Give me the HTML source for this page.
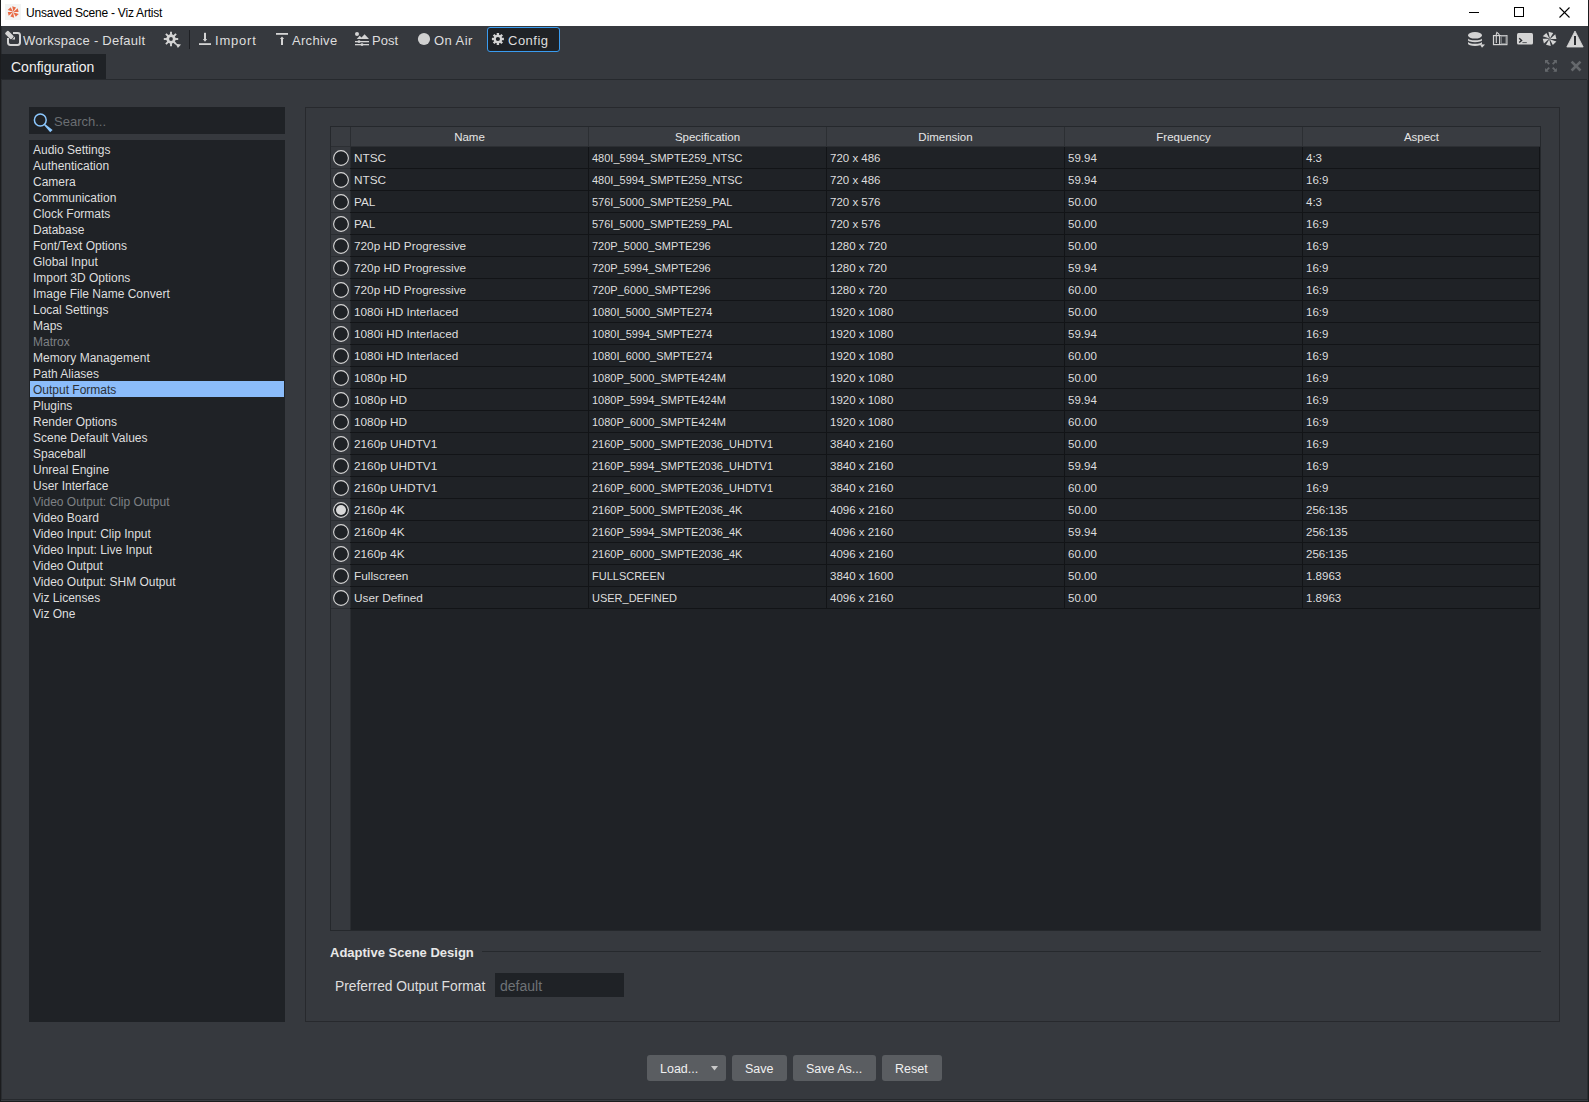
<!DOCTYPE html>
<html><head><meta charset="utf-8"><style>
*{margin:0;padding:0;box-sizing:border-box}
html,body{width:1589px;height:1102px;overflow:hidden;background:#36393e;font-family:"Liberation Sans",sans-serif}
body>div,#root div,#root svg{position:absolute}
.t{white-space:nowrap;line-height:1}
</style></head>
<body><div id="root">
<div style="left:0px;top:0px;width:1px;height:1102px;background:#1b1c1e;"></div>
<div style="left:1px;top:26px;width:1px;height:1075px;background:#2a2d31;"></div>
<div style="left:1588px;top:0px;width:1px;height:1102px;background:#1b1c1e;"></div>
<div style="left:1587px;top:80px;width:1px;height:1020px;background:#2a2d31;"></div>
<div style="left:1px;top:1099px;width:1587px;height:1px;background:#26292d;"></div>
<div style="left:1px;top:1100px;width:1587px;height:1px;background:#393c41;"></div>
<div style="left:0px;top:1101px;width:1589px;height:1px;background:#1b1c1e;"></div>
<div style="left:1px;top:0px;width:1587px;height:26px;background:#ffffff;"></div>
<div style="left:5px;top:4px;width:16px;height:16px;background:#f3f4f4;"></div>
<svg style="left:7px;top:6px" width="13" height="13" viewBox="0 0 13 13"><polygon points="0.2,-0.2 -1.0,-5.8 2.8,-4.6" fill="#e86a45" transform="translate(6.2 6) rotate(0)"/><polygon points="0.2,-0.2 -1.0,-5.8 2.8,-4.6" fill="#e86a45" transform="translate(6.2 6) rotate(60)"/><polygon points="0.2,-0.2 -1.0,-5.8 2.8,-4.6" fill="#e86a45" transform="translate(6.2 6) rotate(120)"/><polygon points="0.2,-0.2 -1.0,-5.8 2.8,-4.6" fill="#e86a45" transform="translate(6.2 6) rotate(180)"/><polygon points="0.2,-0.2 -1.0,-5.8 2.8,-4.6" fill="#e86a45" transform="translate(6.2 6) rotate(240)"/><polygon points="0.2,-0.2 -1.0,-5.8 2.8,-4.6" fill="#e86a45" transform="translate(6.2 6) rotate(300)"/></svg>
<div class="t" style="left:26px;top:7px;font-size:12px;color:#000000;letter-spacing:-0.22px">Unsaved Scene - Viz Artist</div>
<div style="left:1469px;top:12px;width:10px;height:1px;background:#000;"></div>
<div style="left:1514px;top:7px;width:10px;height:10px;background:transparent;border:1px solid #000"></div>
<svg style="left:1559px;top:7px" width="11" height="11" viewBox="0 0 11 11"><g stroke="#000" stroke-width="1.1"><line x1="0.5" y1="0.5" x2="10.5" y2="10.5"/><line x1="10.5" y1="0.5" x2="0.5" y2="10.5"/></g></svg>
<div class="t" style="left:23px;top:34px;font-size:13px;color:#dedede;letter-spacing:0.25px">Workspace - Default</div>
<div class="t" style="left:215px;top:34px;font-size:13px;color:#dedede;letter-spacing:0.8px">Import</div>
<div class="t" style="left:292px;top:34px;font-size:13px;color:#dedede;letter-spacing:0.3px">Archive</div>
<div class="t" style="left:372px;top:34px;font-size:13px;color:#dedede;">Post</div>
<div class="t" style="left:434px;top:34px;font-size:13px;color:#dedede;letter-spacing:0.45px">On Air</div>
<div style="left:487px;top:27px;width:73px;height:25px;background:#1f2226;border:1px solid #3a9cf0;border-radius:3px"></div>
<div class="t" style="left:508px;top:34px;font-size:13px;color:#dedede;letter-spacing:0.5px">Config</div>
<div style="left:1px;top:54px;width:105px;height:25px;background:#1f2226;"></div>
<div class="t" style="left:11px;top:60px;font-size:14px;color:#f0f0f0;">Configuration</div>
<div style="left:2px;top:79px;width:1585px;height:1px;background:#26292d;"></div>
<div style="left:29px;top:107px;width:256px;height:27px;background:#1f2226;"></div>
<div class="t" style="left:54px;top:115px;font-size:13px;color:#6a6e72;">Search...</div>
<div style="left:29px;top:140px;width:256px;height:882px;background:#1f2226;"></div>
<div style="left:30px;top:381px;width:254px;height:16px;background:#8bbcfa;"></div>
<div class="t" style="left:33px;top:144px;font-size:12px;color:#dedede;">Audio Settings</div>
<div class="t" style="left:33px;top:160px;font-size:12px;color:#dedede;">Authentication</div>
<div class="t" style="left:33px;top:176px;font-size:12px;color:#dedede;">Camera</div>
<div class="t" style="left:33px;top:192px;font-size:12px;color:#dedede;">Communication</div>
<div class="t" style="left:33px;top:208px;font-size:12px;color:#dedede;">Clock Formats</div>
<div class="t" style="left:33px;top:224px;font-size:12px;color:#dedede;">Database</div>
<div class="t" style="left:33px;top:240px;font-size:12px;color:#dedede;">Font/Text Options</div>
<div class="t" style="left:33px;top:256px;font-size:12px;color:#dedede;">Global Input</div>
<div class="t" style="left:33px;top:272px;font-size:12px;color:#dedede;">Import 3D Options</div>
<div class="t" style="left:33px;top:288px;font-size:12px;color:#dedede;">Image File Name Convert</div>
<div class="t" style="left:33px;top:304px;font-size:12px;color:#dedede;">Local Settings</div>
<div class="t" style="left:33px;top:320px;font-size:12px;color:#dedede;">Maps</div>
<div class="t" style="left:33px;top:336px;font-size:12px;color:#7d8084;">Matrox</div>
<div class="t" style="left:33px;top:352px;font-size:12px;color:#dedede;">Memory Management</div>
<div class="t" style="left:33px;top:368px;font-size:12px;color:#dedede;">Path Aliases</div>
<div class="t" style="left:33px;top:384px;font-size:12px;color:#2c3035;">Output Formats</div>
<div class="t" style="left:33px;top:400px;font-size:12px;color:#dedede;">Plugins</div>
<div class="t" style="left:33px;top:416px;font-size:12px;color:#dedede;">Render Options</div>
<div class="t" style="left:33px;top:432px;font-size:12px;color:#dedede;">Scene Default Values</div>
<div class="t" style="left:33px;top:448px;font-size:12px;color:#dedede;">Spaceball</div>
<div class="t" style="left:33px;top:464px;font-size:12px;color:#dedede;">Unreal Engine</div>
<div class="t" style="left:33px;top:480px;font-size:12px;color:#dedede;">User Interface</div>
<div class="t" style="left:33px;top:496px;font-size:12px;color:#7d8084;">Video Output: Clip Output</div>
<div class="t" style="left:33px;top:512px;font-size:12px;color:#dedede;">Video Board</div>
<div class="t" style="left:33px;top:528px;font-size:12px;color:#dedede;">Video Input: Clip Input</div>
<div class="t" style="left:33px;top:544px;font-size:12px;color:#dedede;">Video Input: Live Input</div>
<div class="t" style="left:33px;top:560px;font-size:12px;color:#dedede;">Video Output</div>
<div class="t" style="left:33px;top:576px;font-size:12px;color:#dedede;">Video Output: SHM Output</div>
<div class="t" style="left:33px;top:592px;font-size:12px;color:#dedede;">Viz Licenses</div>
<div class="t" style="left:33px;top:608px;font-size:12px;color:#dedede;">Viz One</div>
<div style="left:305px;top:107px;width:1255px;height:915px;background:transparent;border:1px solid #27292d"></div>
<div style="left:330px;top:126px;width:1211px;height:805px;background:#1f2226;border:1px solid #25282c"></div>
<div style="left:331px;top:127px;width:1209px;height:20px;background:#393c41;"></div>
<div style="left:331px;top:146px;width:1209px;height:1px;background:#2c2f33;"></div>
<div style="left:331px;top:147px;width:19px;height:783px;background:#36393e;"></div>
<div style="left:350px;top:127px;width:1px;height:803px;background:#2a2d31;"></div>
<div style="left:588px;top:127px;width:1px;height:19px;background:#2c2f33;"></div>
<div style="left:826px;top:127px;width:1px;height:19px;background:#2c2f33;"></div>
<div style="left:1064px;top:127px;width:1px;height:19px;background:#2c2f33;"></div>
<div style="left:1302px;top:127px;width:1px;height:19px;background:#2c2f33;"></div>
<div class="t" style="left:351px;top:132px;width:237px;text-align:center;font-size:11.5px;color:#e6e6e6">Name</div>
<div class="t" style="left:589px;top:132px;width:237px;text-align:center;font-size:11.5px;color:#e6e6e6">Specification</div>
<div class="t" style="left:827px;top:132px;width:237px;text-align:center;font-size:11.5px;color:#e6e6e6">Dimension</div>
<div class="t" style="left:1065px;top:132px;width:237px;text-align:center;font-size:11.5px;color:#e6e6e6">Frequency</div>
<div class="t" style="left:1303px;top:132px;width:237px;text-align:center;font-size:11.5px;color:#e6e6e6">Aspect</div>
<div style="left:350px;top:168px;width:1190px;height:1px;background:#121417;"></div>
<div style="left:331px;top:168px;width:19px;height:1px;background:#2a2d31;"></div>
<div class="t" style="left:354px;top:153px;font-size:11.8px;color:#dedede;">NTSC</div>
<div class="t" style="left:592px;top:153px;font-size:11px;color:#dedede;">480I_5994_SMPTE259_NTSC</div>
<div class="t" style="left:830px;top:153px;font-size:11.5px;color:#dedede;">720 x 486</div>
<div class="t" style="left:1068px;top:153px;font-size:11.5px;color:#dedede;">59.94</div>
<div class="t" style="left:1306px;top:153px;font-size:11.5px;color:#dedede;">4:3</div>
<svg style="left:333px;top:150px" width="16" height="16" viewBox="0 0 16 16"><circle cx="8" cy="8" r="7.4" fill="#1f2226" stroke="#d6d6d6" stroke-width="1.1"/></svg>
<div style="left:350px;top:190px;width:1190px;height:1px;background:#121417;"></div>
<div style="left:331px;top:190px;width:19px;height:1px;background:#2a2d31;"></div>
<div class="t" style="left:354px;top:175px;font-size:11.8px;color:#dedede;">NTSC</div>
<div class="t" style="left:592px;top:175px;font-size:11px;color:#dedede;">480I_5994_SMPTE259_NTSC</div>
<div class="t" style="left:830px;top:175px;font-size:11.5px;color:#dedede;">720 x 486</div>
<div class="t" style="left:1068px;top:175px;font-size:11.5px;color:#dedede;">59.94</div>
<div class="t" style="left:1306px;top:175px;font-size:11.5px;color:#dedede;">16:9</div>
<svg style="left:333px;top:172px" width="16" height="16" viewBox="0 0 16 16"><circle cx="8" cy="8" r="7.4" fill="#1f2226" stroke="#d6d6d6" stroke-width="1.1"/></svg>
<div style="left:350px;top:212px;width:1190px;height:1px;background:#121417;"></div>
<div style="left:331px;top:212px;width:19px;height:1px;background:#2a2d31;"></div>
<div class="t" style="left:354px;top:197px;font-size:11.8px;color:#dedede;">PAL</div>
<div class="t" style="left:592px;top:197px;font-size:11px;color:#dedede;">576I_5000_SMPTE259_PAL</div>
<div class="t" style="left:830px;top:197px;font-size:11.5px;color:#dedede;">720 x 576</div>
<div class="t" style="left:1068px;top:197px;font-size:11.5px;color:#dedede;">50.00</div>
<div class="t" style="left:1306px;top:197px;font-size:11.5px;color:#dedede;">4:3</div>
<svg style="left:333px;top:194px" width="16" height="16" viewBox="0 0 16 16"><circle cx="8" cy="8" r="7.4" fill="#1f2226" stroke="#d6d6d6" stroke-width="1.1"/></svg>
<div style="left:350px;top:234px;width:1190px;height:1px;background:#121417;"></div>
<div style="left:331px;top:234px;width:19px;height:1px;background:#2a2d31;"></div>
<div class="t" style="left:354px;top:219px;font-size:11.8px;color:#dedede;">PAL</div>
<div class="t" style="left:592px;top:219px;font-size:11px;color:#dedede;">576I_5000_SMPTE259_PAL</div>
<div class="t" style="left:830px;top:219px;font-size:11.5px;color:#dedede;">720 x 576</div>
<div class="t" style="left:1068px;top:219px;font-size:11.5px;color:#dedede;">50.00</div>
<div class="t" style="left:1306px;top:219px;font-size:11.5px;color:#dedede;">16:9</div>
<svg style="left:333px;top:216px" width="16" height="16" viewBox="0 0 16 16"><circle cx="8" cy="8" r="7.4" fill="#1f2226" stroke="#d6d6d6" stroke-width="1.1"/></svg>
<div style="left:350px;top:256px;width:1190px;height:1px;background:#121417;"></div>
<div style="left:331px;top:256px;width:19px;height:1px;background:#2a2d31;"></div>
<div class="t" style="left:354px;top:241px;font-size:11.8px;color:#dedede;">720p HD Progressive</div>
<div class="t" style="left:592px;top:241px;font-size:11px;color:#dedede;">720P_5000_SMPTE296</div>
<div class="t" style="left:830px;top:241px;font-size:11.5px;color:#dedede;">1280 x 720</div>
<div class="t" style="left:1068px;top:241px;font-size:11.5px;color:#dedede;">50.00</div>
<div class="t" style="left:1306px;top:241px;font-size:11.5px;color:#dedede;">16:9</div>
<svg style="left:333px;top:238px" width="16" height="16" viewBox="0 0 16 16"><circle cx="8" cy="8" r="7.4" fill="#1f2226" stroke="#d6d6d6" stroke-width="1.1"/></svg>
<div style="left:350px;top:278px;width:1190px;height:1px;background:#121417;"></div>
<div style="left:331px;top:278px;width:19px;height:1px;background:#2a2d31;"></div>
<div class="t" style="left:354px;top:263px;font-size:11.8px;color:#dedede;">720p HD Progressive</div>
<div class="t" style="left:592px;top:263px;font-size:11px;color:#dedede;">720P_5994_SMPTE296</div>
<div class="t" style="left:830px;top:263px;font-size:11.5px;color:#dedede;">1280 x 720</div>
<div class="t" style="left:1068px;top:263px;font-size:11.5px;color:#dedede;">59.94</div>
<div class="t" style="left:1306px;top:263px;font-size:11.5px;color:#dedede;">16:9</div>
<svg style="left:333px;top:260px" width="16" height="16" viewBox="0 0 16 16"><circle cx="8" cy="8" r="7.4" fill="#1f2226" stroke="#d6d6d6" stroke-width="1.1"/></svg>
<div style="left:350px;top:300px;width:1190px;height:1px;background:#121417;"></div>
<div style="left:331px;top:300px;width:19px;height:1px;background:#2a2d31;"></div>
<div class="t" style="left:354px;top:285px;font-size:11.8px;color:#dedede;">720p HD Progressive</div>
<div class="t" style="left:592px;top:285px;font-size:11px;color:#dedede;">720P_6000_SMPTE296</div>
<div class="t" style="left:830px;top:285px;font-size:11.5px;color:#dedede;">1280 x 720</div>
<div class="t" style="left:1068px;top:285px;font-size:11.5px;color:#dedede;">60.00</div>
<div class="t" style="left:1306px;top:285px;font-size:11.5px;color:#dedede;">16:9</div>
<svg style="left:333px;top:282px" width="16" height="16" viewBox="0 0 16 16"><circle cx="8" cy="8" r="7.4" fill="#1f2226" stroke="#d6d6d6" stroke-width="1.1"/></svg>
<div style="left:350px;top:322px;width:1190px;height:1px;background:#121417;"></div>
<div style="left:331px;top:322px;width:19px;height:1px;background:#2a2d31;"></div>
<div class="t" style="left:354px;top:307px;font-size:11.8px;color:#dedede;">1080i HD Interlaced</div>
<div class="t" style="left:592px;top:307px;font-size:11px;color:#dedede;">1080I_5000_SMPTE274</div>
<div class="t" style="left:830px;top:307px;font-size:11.5px;color:#dedede;">1920 x 1080</div>
<div class="t" style="left:1068px;top:307px;font-size:11.5px;color:#dedede;">50.00</div>
<div class="t" style="left:1306px;top:307px;font-size:11.5px;color:#dedede;">16:9</div>
<svg style="left:333px;top:304px" width="16" height="16" viewBox="0 0 16 16"><circle cx="8" cy="8" r="7.4" fill="#1f2226" stroke="#d6d6d6" stroke-width="1.1"/></svg>
<div style="left:350px;top:344px;width:1190px;height:1px;background:#121417;"></div>
<div style="left:331px;top:344px;width:19px;height:1px;background:#2a2d31;"></div>
<div class="t" style="left:354px;top:329px;font-size:11.8px;color:#dedede;">1080i HD Interlaced</div>
<div class="t" style="left:592px;top:329px;font-size:11px;color:#dedede;">1080I_5994_SMPTE274</div>
<div class="t" style="left:830px;top:329px;font-size:11.5px;color:#dedede;">1920 x 1080</div>
<div class="t" style="left:1068px;top:329px;font-size:11.5px;color:#dedede;">59.94</div>
<div class="t" style="left:1306px;top:329px;font-size:11.5px;color:#dedede;">16:9</div>
<svg style="left:333px;top:326px" width="16" height="16" viewBox="0 0 16 16"><circle cx="8" cy="8" r="7.4" fill="#1f2226" stroke="#d6d6d6" stroke-width="1.1"/></svg>
<div style="left:350px;top:366px;width:1190px;height:1px;background:#121417;"></div>
<div style="left:331px;top:366px;width:19px;height:1px;background:#2a2d31;"></div>
<div class="t" style="left:354px;top:351px;font-size:11.8px;color:#dedede;">1080i HD Interlaced</div>
<div class="t" style="left:592px;top:351px;font-size:11px;color:#dedede;">1080I_6000_SMPTE274</div>
<div class="t" style="left:830px;top:351px;font-size:11.5px;color:#dedede;">1920 x 1080</div>
<div class="t" style="left:1068px;top:351px;font-size:11.5px;color:#dedede;">60.00</div>
<div class="t" style="left:1306px;top:351px;font-size:11.5px;color:#dedede;">16:9</div>
<svg style="left:333px;top:348px" width="16" height="16" viewBox="0 0 16 16"><circle cx="8" cy="8" r="7.4" fill="#1f2226" stroke="#d6d6d6" stroke-width="1.1"/></svg>
<div style="left:350px;top:388px;width:1190px;height:1px;background:#121417;"></div>
<div style="left:331px;top:388px;width:19px;height:1px;background:#2a2d31;"></div>
<div class="t" style="left:354px;top:373px;font-size:11.8px;color:#dedede;">1080p HD</div>
<div class="t" style="left:592px;top:373px;font-size:11px;color:#dedede;">1080P_5000_SMPTE424M</div>
<div class="t" style="left:830px;top:373px;font-size:11.5px;color:#dedede;">1920 x 1080</div>
<div class="t" style="left:1068px;top:373px;font-size:11.5px;color:#dedede;">50.00</div>
<div class="t" style="left:1306px;top:373px;font-size:11.5px;color:#dedede;">16:9</div>
<svg style="left:333px;top:370px" width="16" height="16" viewBox="0 0 16 16"><circle cx="8" cy="8" r="7.4" fill="#1f2226" stroke="#d6d6d6" stroke-width="1.1"/></svg>
<div style="left:350px;top:410px;width:1190px;height:1px;background:#121417;"></div>
<div style="left:331px;top:410px;width:19px;height:1px;background:#2a2d31;"></div>
<div class="t" style="left:354px;top:395px;font-size:11.8px;color:#dedede;">1080p HD</div>
<div class="t" style="left:592px;top:395px;font-size:11px;color:#dedede;">1080P_5994_SMPTE424M</div>
<div class="t" style="left:830px;top:395px;font-size:11.5px;color:#dedede;">1920 x 1080</div>
<div class="t" style="left:1068px;top:395px;font-size:11.5px;color:#dedede;">59.94</div>
<div class="t" style="left:1306px;top:395px;font-size:11.5px;color:#dedede;">16:9</div>
<svg style="left:333px;top:392px" width="16" height="16" viewBox="0 0 16 16"><circle cx="8" cy="8" r="7.4" fill="#1f2226" stroke="#d6d6d6" stroke-width="1.1"/></svg>
<div style="left:350px;top:432px;width:1190px;height:1px;background:#121417;"></div>
<div style="left:331px;top:432px;width:19px;height:1px;background:#2a2d31;"></div>
<div class="t" style="left:354px;top:417px;font-size:11.8px;color:#dedede;">1080p HD</div>
<div class="t" style="left:592px;top:417px;font-size:11px;color:#dedede;">1080P_6000_SMPTE424M</div>
<div class="t" style="left:830px;top:417px;font-size:11.5px;color:#dedede;">1920 x 1080</div>
<div class="t" style="left:1068px;top:417px;font-size:11.5px;color:#dedede;">60.00</div>
<div class="t" style="left:1306px;top:417px;font-size:11.5px;color:#dedede;">16:9</div>
<svg style="left:333px;top:414px" width="16" height="16" viewBox="0 0 16 16"><circle cx="8" cy="8" r="7.4" fill="#1f2226" stroke="#d6d6d6" stroke-width="1.1"/></svg>
<div style="left:350px;top:454px;width:1190px;height:1px;background:#121417;"></div>
<div style="left:331px;top:454px;width:19px;height:1px;background:#2a2d31;"></div>
<div class="t" style="left:354px;top:439px;font-size:11.8px;color:#dedede;">2160p UHDTV1</div>
<div class="t" style="left:592px;top:439px;font-size:11px;color:#dedede;">2160P_5000_SMPTE2036_UHDTV1</div>
<div class="t" style="left:830px;top:439px;font-size:11.5px;color:#dedede;">3840 x 2160</div>
<div class="t" style="left:1068px;top:439px;font-size:11.5px;color:#dedede;">50.00</div>
<div class="t" style="left:1306px;top:439px;font-size:11.5px;color:#dedede;">16:9</div>
<svg style="left:333px;top:436px" width="16" height="16" viewBox="0 0 16 16"><circle cx="8" cy="8" r="7.4" fill="#1f2226" stroke="#d6d6d6" stroke-width="1.1"/></svg>
<div style="left:350px;top:476px;width:1190px;height:1px;background:#121417;"></div>
<div style="left:331px;top:476px;width:19px;height:1px;background:#2a2d31;"></div>
<div class="t" style="left:354px;top:461px;font-size:11.8px;color:#dedede;">2160p UHDTV1</div>
<div class="t" style="left:592px;top:461px;font-size:11px;color:#dedede;">2160P_5994_SMPTE2036_UHDTV1</div>
<div class="t" style="left:830px;top:461px;font-size:11.5px;color:#dedede;">3840 x 2160</div>
<div class="t" style="left:1068px;top:461px;font-size:11.5px;color:#dedede;">59.94</div>
<div class="t" style="left:1306px;top:461px;font-size:11.5px;color:#dedede;">16:9</div>
<svg style="left:333px;top:458px" width="16" height="16" viewBox="0 0 16 16"><circle cx="8" cy="8" r="7.4" fill="#1f2226" stroke="#d6d6d6" stroke-width="1.1"/></svg>
<div style="left:350px;top:498px;width:1190px;height:1px;background:#121417;"></div>
<div style="left:331px;top:498px;width:19px;height:1px;background:#2a2d31;"></div>
<div class="t" style="left:354px;top:483px;font-size:11.8px;color:#dedede;">2160p UHDTV1</div>
<div class="t" style="left:592px;top:483px;font-size:11px;color:#dedede;">2160P_6000_SMPTE2036_UHDTV1</div>
<div class="t" style="left:830px;top:483px;font-size:11.5px;color:#dedede;">3840 x 2160</div>
<div class="t" style="left:1068px;top:483px;font-size:11.5px;color:#dedede;">60.00</div>
<div class="t" style="left:1306px;top:483px;font-size:11.5px;color:#dedede;">16:9</div>
<svg style="left:333px;top:480px" width="16" height="16" viewBox="0 0 16 16"><circle cx="8" cy="8" r="7.4" fill="#1f2226" stroke="#d6d6d6" stroke-width="1.1"/></svg>
<div style="left:350px;top:520px;width:1190px;height:1px;background:#121417;"></div>
<div style="left:331px;top:520px;width:19px;height:1px;background:#2a2d31;"></div>
<div class="t" style="left:354px;top:505px;font-size:11.8px;color:#dedede;">2160p 4K</div>
<div class="t" style="left:592px;top:505px;font-size:11px;color:#dedede;">2160P_5000_SMPTE2036_4K</div>
<div class="t" style="left:830px;top:505px;font-size:11.5px;color:#dedede;">4096 x 2160</div>
<div class="t" style="left:1068px;top:505px;font-size:11.5px;color:#dedede;">50.00</div>
<div class="t" style="left:1306px;top:505px;font-size:11.5px;color:#dedede;">256:135</div>
<svg style="left:333px;top:502px" width="16" height="16" viewBox="0 0 16 16"><circle cx="8" cy="8" r="7.4" fill="#1f2226" stroke="#d6d6d6" stroke-width="1.1"/><circle cx="8" cy="8" r="5" fill="#d8d8d8"/></svg>
<div style="left:350px;top:542px;width:1190px;height:1px;background:#121417;"></div>
<div style="left:331px;top:542px;width:19px;height:1px;background:#2a2d31;"></div>
<div class="t" style="left:354px;top:527px;font-size:11.8px;color:#dedede;">2160p 4K</div>
<div class="t" style="left:592px;top:527px;font-size:11px;color:#dedede;">2160P_5994_SMPTE2036_4K</div>
<div class="t" style="left:830px;top:527px;font-size:11.5px;color:#dedede;">4096 x 2160</div>
<div class="t" style="left:1068px;top:527px;font-size:11.5px;color:#dedede;">59.94</div>
<div class="t" style="left:1306px;top:527px;font-size:11.5px;color:#dedede;">256:135</div>
<svg style="left:333px;top:524px" width="16" height="16" viewBox="0 0 16 16"><circle cx="8" cy="8" r="7.4" fill="#1f2226" stroke="#d6d6d6" stroke-width="1.1"/></svg>
<div style="left:350px;top:564px;width:1190px;height:1px;background:#121417;"></div>
<div style="left:331px;top:564px;width:19px;height:1px;background:#2a2d31;"></div>
<div class="t" style="left:354px;top:549px;font-size:11.8px;color:#dedede;">2160p 4K</div>
<div class="t" style="left:592px;top:549px;font-size:11px;color:#dedede;">2160P_6000_SMPTE2036_4K</div>
<div class="t" style="left:830px;top:549px;font-size:11.5px;color:#dedede;">4096 x 2160</div>
<div class="t" style="left:1068px;top:549px;font-size:11.5px;color:#dedede;">60.00</div>
<div class="t" style="left:1306px;top:549px;font-size:11.5px;color:#dedede;">256:135</div>
<svg style="left:333px;top:546px" width="16" height="16" viewBox="0 0 16 16"><circle cx="8" cy="8" r="7.4" fill="#1f2226" stroke="#d6d6d6" stroke-width="1.1"/></svg>
<div style="left:350px;top:586px;width:1190px;height:1px;background:#121417;"></div>
<div style="left:331px;top:586px;width:19px;height:1px;background:#2a2d31;"></div>
<div class="t" style="left:354px;top:571px;font-size:11.8px;color:#dedede;">Fullscreen</div>
<div class="t" style="left:592px;top:571px;font-size:11px;color:#dedede;">FULLSCREEN</div>
<div class="t" style="left:830px;top:571px;font-size:11.5px;color:#dedede;">3840 x 1600</div>
<div class="t" style="left:1068px;top:571px;font-size:11.5px;color:#dedede;">50.00</div>
<div class="t" style="left:1306px;top:571px;font-size:11.5px;color:#dedede;">1.8963</div>
<svg style="left:333px;top:568px" width="16" height="16" viewBox="0 0 16 16"><circle cx="8" cy="8" r="7.4" fill="#1f2226" stroke="#d6d6d6" stroke-width="1.1"/></svg>
<div style="left:350px;top:608px;width:1190px;height:1px;background:#121417;"></div>
<div style="left:331px;top:608px;width:19px;height:1px;background:#2a2d31;"></div>
<div class="t" style="left:354px;top:593px;font-size:11.8px;color:#dedede;">User Defined</div>
<div class="t" style="left:592px;top:593px;font-size:11px;color:#dedede;">USER_DEFINED</div>
<div class="t" style="left:830px;top:593px;font-size:11.5px;color:#dedede;">4096 x 2160</div>
<div class="t" style="left:1068px;top:593px;font-size:11.5px;color:#dedede;">50.00</div>
<div class="t" style="left:1306px;top:593px;font-size:11.5px;color:#dedede;">1.8963</div>
<svg style="left:333px;top:590px" width="16" height="16" viewBox="0 0 16 16"><circle cx="8" cy="8" r="7.4" fill="#1f2226" stroke="#d6d6d6" stroke-width="1.1"/></svg>
<div style="left:588px;top:147px;width:1px;height:462px;background:#121417;"></div>
<div style="left:826px;top:147px;width:1px;height:462px;background:#121417;"></div>
<div style="left:1064px;top:147px;width:1px;height:462px;background:#121417;"></div>
<div style="left:1302px;top:147px;width:1px;height:462px;background:#121417;"></div>
<div style="left:1539px;top:147px;width:1px;height:462px;background:#121417;"></div>
<div class="t" style="left:330px;top:946px;font-size:13px;color:#e8e8e8;font-weight:bold">Adaptive Scene Design</div>
<div style="left:482px;top:951px;width:1059px;height:1px;background:#26292d;"></div>
<div class="t" style="left:335px;top:980px;font-size:13.8px;color:#dedede;">Preferred Output Format</div>
<div style="left:495px;top:973px;width:129px;height:24px;background:#1f2226;"></div>
<div class="t" style="left:500px;top:979px;font-size:14px;color:#6e7276;">default</div>
<div style="left:647px;top:1055px;width:79px;height:26px;background:#5a5d61;border-radius:3px"></div>
<div class="t" style="left:660px;top:1063px;font-size:12.5px;color:#f0f0f0;">Load...</div>
<svg style="left:711px;top:1066px" width="7" height="5" viewBox="0 0 7 5"><polygon points="0,0 7,0 3.5,4.5" fill="#c8c8c8"/></svg>
<div style="left:732px;top:1055px;width:55px;height:26px;background:#5a5d61;border-radius:3px"></div>
<div class="t" style="left:745px;top:1063px;font-size:12.5px;color:#f0f0f0;">Save</div>
<div style="left:793px;top:1055px;width:83px;height:26px;background:#5a5d61;border-radius:3px"></div>
<div class="t" style="left:806px;top:1063px;font-size:12.5px;color:#f0f0f0;">Save As...</div>
<div style="left:882px;top:1055px;width:60px;height:26px;background:#5a5d61;border-radius:3px"></div>
<div class="t" style="left:895px;top:1063px;font-size:12.5px;color:#f0f0f0;">Reset</div>
<svg style="left:2px;top:28px;" width="24" height="22" viewBox="0 0 24 22"><path d="M11 4.9 H15.6 Q18 4.9 18 7.3 V14.6 Q18 17 15.6 17 H8.4 Q6 17 6 14.6 V10" fill="none" stroke="#d4d4d4" stroke-width="2"/><g transform="rotate(45 7.4 7.0)"><rect x="3.0" y="4.8" width="8.8" height="4.4" rx="1" fill="#d4d4d4"/></g><polygon points="10.0,11.4 13.0,8.4 13.0,11.4" fill="#d4d4d4"/></svg>
<svg style="left:160px;top:28px;" width="24" height="24" viewBox="0 0 24 24"><g stroke="#d4d4d4" stroke-width="1.9" stroke-linecap="butt"><line x1="11" y1="11" x2="18.20" y2="11.00"/><line x1="11" y1="11" x2="16.09" y2="16.09"/><line x1="11" y1="11" x2="11.00" y2="18.20"/><line x1="11" y1="11" x2="5.91" y2="16.09"/><line x1="11" y1="11" x2="3.80" y2="11.00"/><line x1="11" y1="11" x2="5.91" y2="5.91"/><line x1="11" y1="11" x2="11.00" y2="3.80"/><line x1="11" y1="11" x2="16.09" y2="5.91"/></g><circle cx="11" cy="11" r="3.4" fill="none" stroke="#d4d4d4" stroke-width="2.6"/><circle cx="11" cy="11" r="1.9" fill="#36393e"/><polygon points="15.6,15.8 21,16.4 17.9,20" fill="#d4d4d4"/></svg>
<div style="left:189px;top:30px;width:1px;height:19px;background:#1e2024"></div>
<svg style="left:196px;top:28px;" width="20" height="20" viewBox="0 0 20 20"><rect x="8" y="4.8" width="2" height="6.6" fill="#d4d4d4"/><polygon points="6.8,11 11.2,11 9,13.8" fill="#d4d4d4"/><rect x="3" y="15.2" width="12" height="1.8" fill="#d4d4d4"/></svg>
<svg style="left:272px;top:28px;" width="20" height="20" viewBox="0 0 20 20"><rect x="4" y="5" width="12" height="1.8" fill="#d4d4d4"/><polygon points="7.9,11 12.1,11 10,8.4" fill="#d4d4d4"/><rect x="9" y="10.8" width="2" height="6.2" fill="#d4d4d4"/></svg>
<svg style="left:350px;top:28px;" width="22" height="22" viewBox="0 0 22 22"><circle cx="7" cy="6" r="2" fill="#d4d4d4"/><polygon points="6.8,10.9 9.7,7.8 11.5,9.5 14.6,6.3 19,10.9" fill="#d4d4d4"/><rect x="5" y="13" width="14" height="1.3" fill="#d4d4d4"/><rect x="5" y="16" width="14" height="1.3" fill="#d4d4d4"/><circle cx="9" cy="13.6" r="1.4" fill="#d4d4d4"/><circle cx="12" cy="16.6" r="1.4" fill="#d4d4d4"/></svg>
<svg style="left:416px;top:31px;" width="16" height="16" viewBox="0 0 16 16"><circle cx="8" cy="8" r="6.1" fill="#d0d0d0"/></svg>
<svg style="left:486px;top:26px;" width="24" height="26" viewBox="0 0 24 26"><g stroke="#d4d4d4" stroke-width="2.4"><line x1="11.9" y1="13" x2="17.90" y2="13.00"/><line x1="11.9" y1="13" x2="16.14" y2="17.24"/><line x1="11.9" y1="13" x2="11.90" y2="19.00"/><line x1="11.9" y1="13" x2="7.66" y2="17.24"/><line x1="11.9" y1="13" x2="5.90" y2="13.00"/><line x1="11.9" y1="13" x2="7.66" y2="8.76"/><line x1="11.9" y1="13" x2="11.90" y2="7.00"/><line x1="11.9" y1="13" x2="16.14" y2="8.76"/></g><circle cx="11.9" cy="13" r="3.2" fill="none" stroke="#d4d4d4" stroke-width="2.2"/><circle cx="11.9" cy="13" r="2.1" fill="#1f2226"/></svg>
<svg style="left:1466px;top:29px;" width="22" height="22" viewBox="0 0 22 22"><ellipse cx="9" cy="6.3" rx="7" ry="3.3" fill="#d4d4d4"/><path d="M2 9.4 A7 1.9 0 0 0 16 9.4 L16 11.2 A7 2.0 0 0 1 2 11.2 Z" fill="#d4d4d4"/><path d="M2 12.8 A7 1.9 0 0 0 16 12.8 L16 14.8 A7 2.1 0 0 1 2 14.8 Z" fill="#d4d4d4"/><polygon points="13.8,15.2 19,15.4 16,18.8" fill="#d4d4d4"/></svg>
<svg style="left:1490px;top:29px;" width="20" height="20" viewBox="0 0 20 20"><rect x="3.5" y="6.6" width="13.4" height="9" fill="none" stroke="#d4d4d4" stroke-width="1.2"/><path d="M6.3 14 V5 L6.9 3.4 L8.6 4.8 L9.6 6.6 V15.6" fill="none" stroke="#d4d4d4" stroke-width="1.1"/><rect x="11.2" y="7.1" width="4.8" height="7.6" fill="none" stroke="#8e9194" stroke-width="1"/></svg>
<svg style="left:1512px;top:28px;" width="24" height="24" viewBox="0 0 24 24"><rect x="5" y="5" width="16" height="11.6" rx="1.5" fill="#d4d4d4"/><polyline points="7.2,10.2 9.6,12.4 7.2,14.6" fill="none" stroke="#2a2c30" stroke-width="1.4"/><rect x="10.4" y="14.1" width="4.4" height="1" fill="#55585c"/></svg>
<svg style="left:1540px;top:29px;" width="20" height="20" viewBox="0 0 20 20"><polygon points="0.3,-0.3 -1.2,-7.2 3.6,-5.8" fill="#d4d4d4" transform="translate(9.6 9.9) rotate(0)"/><polygon points="0.3,-0.3 -1.2,-7.2 3.6,-5.8" fill="#d4d4d4" transform="translate(9.6 9.9) rotate(60)"/><polygon points="0.3,-0.3 -1.2,-7.2 3.6,-5.8" fill="#d4d4d4" transform="translate(9.6 9.9) rotate(120)"/><polygon points="0.3,-0.3 -1.2,-7.2 3.6,-5.8" fill="#d4d4d4" transform="translate(9.6 9.9) rotate(180)"/><polygon points="0.3,-0.3 -1.2,-7.2 3.6,-5.8" fill="#d4d4d4" transform="translate(9.6 9.9) rotate(240)"/><polygon points="0.3,-0.3 -1.2,-7.2 3.6,-5.8" fill="#d4d4d4" transform="translate(9.6 9.9) rotate(300)"/><circle cx="9.6" cy="9.9" r="0.9" fill="#8a8c8f"/></svg>
<svg style="left:1564px;top:28px;" width="24" height="22" viewBox="0 0 24 22"><polygon points="11,3 19.2,19 2.8,19" fill="#d4d4d4" stroke="#d4d4d4" stroke-width="0.8" stroke-linejoin="round"/><rect x="10" y="8" width="2" height="9" fill="#2a2c30"/></svg>
<svg style="left:1540px;top:54px;" width="24" height="24" viewBox="0 0 24 24"><polygon points="5,5.9 8.8,5.9 5,9.7" fill="#65686c"/><line x1="6" y1="6.9" x2="9.2" y2="10.100000000000001" stroke="#65686c" stroke-width="1.9"/><polygon points="16.9,5.9 13.099999999999998,5.9 16.9,9.7" fill="#65686c"/><line x1="15.899999999999999" y1="6.9" x2="12.7" y2="10.100000000000001" stroke="#65686c" stroke-width="1.9"/><polygon points="5,17.8 8.8,17.8 5,14.0" fill="#65686c"/><line x1="6" y1="16.8" x2="9.2" y2="13.600000000000001" stroke="#65686c" stroke-width="1.9"/><polygon points="16.9,17.8 13.099999999999998,17.8 16.9,14.0" fill="#65686c"/><line x1="15.899999999999999" y1="16.8" x2="12.7" y2="13.600000000000001" stroke="#65686c" stroke-width="1.9"/></svg>
<svg style="left:1564px;top:54px;" width="24" height="24" viewBox="0 0 24 24"><g stroke="#65686c" stroke-width="2.6"><line x1="7.6" y1="7.6" x2="16.5" y2="16.5"/><line x1="16.5" y1="7.6" x2="7.6" y2="16.5"/></g></svg>
<svg style="left:29px;top:107px;" width="26" height="27" viewBox="0 0 26 27"><circle cx="11.3" cy="13" r="5.9" fill="none" stroke="#8cc8ff" stroke-width="1.5"/><polygon points="15.0,17.9 16.0,16.9 23.6,22.9 21.2,25.2" fill="#8cc8ff"/></svg>

</div></body></html>
